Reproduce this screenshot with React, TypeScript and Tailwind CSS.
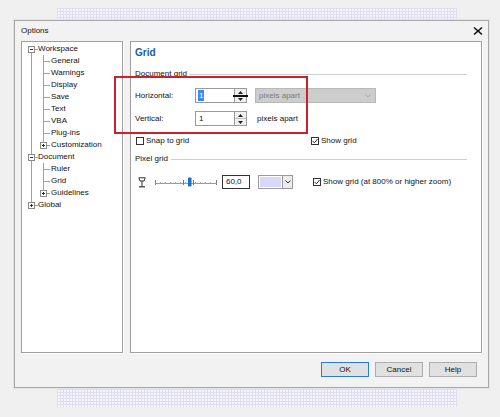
import React from "react";

type L0 = "first" | "mid" | "last" | "through";
type L1 = "mid" | "last";
type Row = { label: string; l0: L0; l1?: L1; box?: "plus" | "minus" };

const rows: Row[] = [
  { label: "Workspace", l0: "first", box: "minus" },
  { label: "General", l0: "through", l1: "mid" },
  { label: "Warnings", l0: "through", l1: "mid" },
  { label: "Display", l0: "through", l1: "mid" },
  { label: "Save", l0: "through", l1: "mid" },
  { label: "Text", l0: "through", l1: "mid" },
  { label: "VBA", l0: "through", l1: "mid" },
  { label: "Plug-ins", l0: "through", l1: "mid" },
  { label: "Customization", l0: "through", l1: "last", box: "plus" },
  { label: "Document", l0: "mid", box: "minus" },
  { label: "Ruler", l0: "through", l1: "mid" },
  { label: "Grid", l0: "through", l1: "mid" },
  { label: "Guidelines", l0: "through", l1: "last", box: "plus" },
  { label: "Global", l0: "last", box: "plus" },
];

const LINE = "#a0a0a0";

function Box({ cx, kind }: { cx: number; kind: "plus" | "minus" }) {
  return (
    <g>
      <rect x={cx - 3} y={3.5} width={6} height={6} fill="#fff" stroke="#8a8a8a" strokeWidth={1} />
      <line x1={cx - 1.5} y1={6.5} x2={cx + 1.5} y2={6.5} stroke="#333" strokeWidth={1} />
      {kind === "plus" && <line x1={cx} y1={5} x2={cx} y2={8} stroke="#333" strokeWidth={1} />}
    </g>
  );
}

function L0Cell({ kind, box }: { kind: L0; box?: "plus" | "minus" }) {
  const x = 9.5;
  const y1 = kind === "first" ? 6.5 : 0;
  const y2 = kind === "last" ? 6.5 : 12;
  return (
    <svg width="16" height="12" className="shrink-0">
      <line x1={x} y1={y1} x2={x} y2={y2} stroke={LINE} strokeWidth={1} />
      {kind !== "through" && <line x1={x} y1={6.5} x2={16} y2={6.5} stroke={LINE} strokeWidth={1} />}
      {box && <Box cx={x} kind={box} />}
    </svg>
  );
}

function L1Cell({ kind, box }: { kind: L1; box?: "plus" | "minus" }) {
  const x = 5.5;
  return (
    <svg width="13" height="12" className="shrink-0">
      <line x1={x} y1={0} x2={x} y2={kind === "last" ? 6.5 : 12} stroke={LINE} strokeWidth={1} />
      <line x1={x} y1={6.5} x2={12} y2={6.5} stroke={LINE} strokeWidth={1} />
      {box && <Box cx={x} kind={box} />}
    </svg>
  );
}

function Tree() {
  return (
    <div className="flex flex-col pt-[1px] pl-[0px]">
      {rows.map((r) => (
        <div key={r.label} className="flex h-[12px] items-center">
          <L0Cell kind={r.l0} box={r.l1 ? undefined : r.box} />
          {r.l1 && <L1Cell kind={r.l1} box={r.box} />}
          <span className="ml-[0px] leading-[12px] text-[8px] text-[#111] whitespace-nowrap">{r.label}</span>
        </div>
      ))}
    </div>
  );
}

function Spinner({ mark }: { mark?: boolean }) {
  return (
    <div className="relative flex h-full w-[12px] flex-col border border-l-0 border-[#9a9a9a] bg-[#f0f0f0]">
      <div className="flex flex-1 items-center justify-center border-b border-[#c0c0c0]">
        <svg width="5" height="3"><polygon points="0,3 5,3 2.5,0" fill="#222" /></svg>
      </div>
      <div className="flex flex-1 items-center justify-center">
        <svg width="5" height="3"><polygon points="0,0 5,0 2.5,3" fill="#222" /></svg>
      </div>
      {mark && <div className="absolute left-[-2px] right-[-2px] top-[6px] h-[1.5px] bg-[#111]" />}
    </div>
  );
}

function CheckBox({ checked }: { checked?: boolean }) {
  return (
    <div className="flex h-[8px] w-[8px] shrink-0 items-center justify-center border border-[#333] bg-white">
      {checked && (
        <svg width="6" height="6" viewBox="0 0 6 6">
          <polyline points="0.6,3 2.4,4.8 5.6,1" fill="none" stroke="#222" strokeWidth={1} />
        </svg>
      )}
    </div>
  );
}

function Btn({ label, def }: { label: string; def?: boolean }) {
  return (
    <div
      className={`flex h-[15px] w-[48px] items-center justify-center border bg-[#e1e1e1] text-[8px] text-[#111] ${
        def ? "border-[#2b7bd6]" : "border-[#adadad]"
      }`}
    >
      {label}
    </div>
  );
}

export default function App() {
  return (
    <div
      className="relative h-[417px] w-[500px] overflow-hidden bg-[#f0f0f0]"
      style={{ fontFamily: '"Liberation Sans", Arial, sans-serif' }}
    >
      <div className="absolute left-[57px] top-[8px] h-[399px] w-[400px] bg-[#f5f5fb] bg-[linear-gradient(90deg,#dedef0_1px,transparent_1px),linear-gradient(#dedef0_1px,transparent_1px)] bg-[size:3px_3px]" />
      <div className="relative ml-[14px] flex h-[368px] w-[475px] flex-col border border-[#a8a8a8] bg-[#f2f2f2] shadow-[0_0_0_1px_#e4e4e4] top-[20px]">
        <div className="flex h-[20px] shrink-0 items-center justify-between pl-[6px] pr-[5px]">
          <span className="text-[8px] text-[#111]">Options</span>
          <svg width="10" height="10" viewBox="0 0 10 10" className="mt-[-1px]">
            <line x1="1" y1="1.5" x2="9" y2="8.5" stroke="#111" strokeWidth="1.6" />
            <line x1="9" y1="1.5" x2="1" y2="8.5" stroke="#111" strokeWidth="1.6" />
          </svg>
        </div>
        <div className="flex h-[312px] shrink-0 gap-[7px] px-[6px]">
          <div className="w-[102px] border border-[#a0a0a0] bg-white shadow-[1px_1px_0_#fff]">
            <Tree />
          </div>
          <div className="flex w-[352px] flex-col border border-[#a0a0a0] bg-white pl-[4px] pt-[5px] shadow-[1px_1px_0_#fff]">
            <div className="relative flex flex-col">
              <div className="text-[10px] font-bold leading-[12px] text-[#1e5aa4]">Grid</div>
              <div className="mt-[10px] flex h-[10px] items-center pr-[14px]">
                <span className="text-[8px] leading-[10px] text-[#111] whitespace-nowrap">Document grid</span>
                <div className="ml-[2px] h-px flex-1 bg-[#cfcfcf]" />
              </div>
              <div className="mt-[9px] flex h-[15px] items-center">
                <span className="w-[60px] text-[8px] text-[#111]">Horizontal:</span>
                <div className="flex h-full w-[40px] items-center border border-[#9a9a9a] bg-white pl-[2px]">
                  <span className="bg-[#3a8ee6] px-[1px] text-[8px] leading-[11px] text-white">1</span>
                </div>
                <Spinner mark />
                <div className="ml-[8px] flex h-full w-[121px] items-center justify-between border border-[#b8b8b8] bg-[#cdcdcd] pl-[3px] pr-[4px]">
                  <span className="text-[8px] text-[#7a7a7a]">pixels apart</span>
                  <svg width="6" height="4"><polyline points="0.5,0.5 3,3 5.5,0.5" fill="none" stroke="#a8a8a8" strokeWidth="1" /></svg>
                </div>
              </div>
              <div className="mt-[8px] flex h-[15px] items-center">
                <span className="w-[60px] text-[8px] text-[#111]">Vertical:</span>
                <div className="flex h-full w-[40px] items-center border border-[#9a9a9a] bg-white pl-[3px]">
                  <span className="text-[8px] text-[#111]">1</span>
                </div>
                <Spinner />
                <span className="ml-[10px] text-[8px] text-[#111]">pixels apart</span>
              </div>
              <div className="mt-[10px] flex h-[10px] items-center">
                <div className="flex w-[176px] items-center pl-[1px]">
                  <CheckBox />
                  <span className="ml-[2px] text-[8px] text-[#111]">Snap to grid</span>
                </div>
                <CheckBox checked />
                <span className="ml-[2px] text-[8px] text-[#111]">Show grid</span>
              </div>
              <div className="mt-[8px] flex h-[10px] items-center pr-[14px]">
                <span className="text-[8px] leading-[10px] text-[#111] whitespace-nowrap">Pixel grid</span>
                <div className="ml-[3px] h-px flex-1 bg-[#cfcfcf]" />
              </div>
              <div className="mt-[11px] flex h-[14px] items-center">
                <svg width="8" height="11" viewBox="0 0 8 11" className="ml-[3px] shrink-0">
                  <path d="M0.8,0.8 H7.2 L6,4 H2 Z" fill="none" stroke="#333" strokeWidth="1" />
                  <line x1="4" y1="4" x2="4" y2="9.5" stroke="#333" strokeWidth="1" />
                  <line x1="1" y1="9.8" x2="7" y2="9.8" stroke="#333" strokeWidth="1.2" />
                </svg>
                <svg width="62" height="12" viewBox="0 0 62 12" className="ml-[9px] shrink-0">
                  <line x1="0.5" y1="4" x2="0.5" y2="9" stroke="#777" strokeWidth="1" />
                  <line x1="61.5" y1="4" x2="61.5" y2="9" stroke="#777" strokeWidth="1" />
                  <line x1="0" y1="7.5" x2="62" y2="7.5" stroke="#9a9a9a" strokeWidth="1" />
                  {[5, 10, 15, 20, 25, 30, 40, 45, 50, 55].map((t) => (
                    <line key={t} x1={t + 0.5} y1="6" x2={t + 0.5} y2="7.5" stroke="#aaa" strokeWidth="1" />
                  ))}
                  <line x1="28.5" y1="4" x2="28.5" y2="9" stroke="#777" strokeWidth="1" />
                  <line x1="38.5" y1="4" x2="38.5" y2="9" stroke="#777" strokeWidth="1" />
                  <rect x="33" y="1.5" width="3.5" height="9" rx="0.8" fill="#1b6fd2" />
                </svg>
                <div className="ml-[5px] flex h-full w-[28px] items-center border border-[#333] bg-white pl-[3px]">
                  <span className="text-[8px] text-[#111]">60,0</span>
                </div>
                <div className="ml-[8px] flex h-full w-[35px] border border-[#9a9a9a] bg-white">
                  <div className="m-[1px] flex-1 bg-[#d8d8fa]" />
                  <div className="flex w-[10px] items-center justify-center border-l border-[#9a9a9a] bg-[#ececec]">
                    <svg width="6" height="4"><polyline points="0.5,0.5 3,3 5.5,0.5" fill="none" stroke="#333" strokeWidth="1" /></svg>
                  </div>
                </div>
                <div className="ml-[20px] flex items-center">
                  <CheckBox checked />
                  <span className="ml-[2px] text-[8px] text-[#111]">Show grid (at 800% or higher zoom)</span>
                </div>
              </div>
            </div>
          </div>
        </div>
        <div className="mt-[9px] flex justify-end gap-[6px] pr-[11px]">
          <Btn label="OK" def />
          <Btn label="Cancel" />
          <Btn label="Help" />
        </div>
        <div className="pointer-events-none absolute left-[99px] top-[55px] h-[58px] w-[194px] border-2 border-[#c8232c]" />
      </div>
    </div>
  );
}
